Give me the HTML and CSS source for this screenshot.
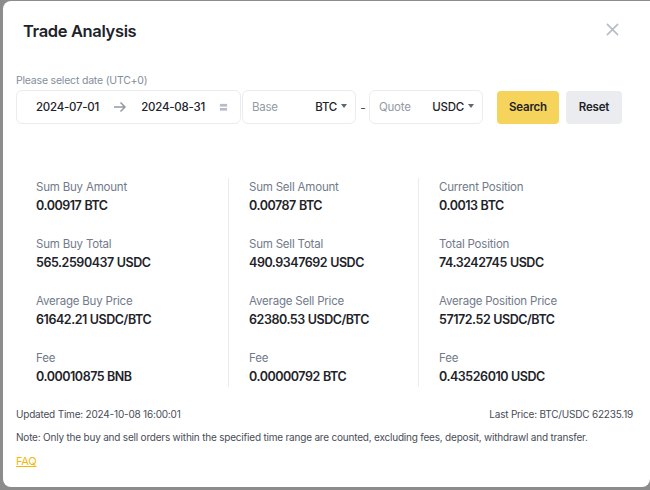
FILE: index.html
```html
<!DOCTYPE html>
<html>
<head>
<meta charset="utf-8">
<link rel="stylesheet" href="styles.css">
</head>
<body>
<div class="modal">
  <div class="header">
    <h1 class="title">Trade Analysis</h1>
    <span class="close">
      <svg width="13" height="13" viewBox="0 0 14 14"><path d="M1.5 1.5L12.5 12.5M12.5 1.5L1.5 12.5" stroke="#b7bdc6" stroke-width="1.8" stroke-linecap="round"/></svg>
    </span>
  </div>
  <div class="filters">
    <div class="label">Please select date (UTC+0)</div>
    <div class="row">
      <div class="field date">
        <span class="val">2024-07-01</span>
        <svg class="arrow" width="14" height="12" viewBox="0 0 14 12"><path d="M1 6H12M7.5 1.5L12 6L7.5 10.5" stroke="#929aa5" stroke-width="1.5" fill="none"/></svg>
        <span class="val">2024-08-31</span>
        <svg class="cal" width="9" height="9" viewBox="0 0 10 10"><rect x="1" y="1" width="8" height="3" fill="#b7bdc6"/><rect x="1" y="5.5" width="8" height="3" fill="#b7bdc6"/></svg>
      </div>
      <div class="field pair">
        <span class="ph">Base</span>
        <span class="sel">BTC<i class="caret"></i></span>
      </div>
      <span class="dash">-</span>
      <div class="field pair">
        <span class="ph">Quote</span>
        <span class="sel">USDC<i class="caret"></i></span>
      </div>
      <button class="btn primary">Search</button>
      <button class="btn secondary">Reset</button>
    </div>
  </div>
  <div class="stats">
    <div class="col">
      <div class="item"><div class="k">Sum Buy Amount</div><div class="v">0.00917<span class="u">BTC</span></div></div>
      <div class="item"><div class="k">Sum Buy Total</div><div class="v">565.2590437<span class="u">USDC</span></div></div>
      <div class="item"><div class="k">Average Buy Price</div><div class="v">61642.21<span class="u">USDC/BTC</span></div></div>
      <div class="item"><div class="k">Fee</div><div class="v">0.00010875 BNB</div></div>
    </div>
    <div class="col">
      <div class="item"><div class="k">Sum Sell Amount</div><div class="v">0.00787<span class="u">BTC</span></div></div>
      <div class="item"><div class="k">Sum Sell Total</div><div class="v">490.9347692<span class="u">USDC</span></div></div>
      <div class="item"><div class="k">Average Sell Price</div><div class="v">62380.53<span class="u">USDC/BTC</span></div></div>
      <div class="item"><div class="k">Fee</div><div class="v">0.00000792<span class="u">BTC</span></div></div>
    </div>
    <div class="col">
      <div class="item"><div class="k">Current Position</div><div class="v">0.0013<span class="u">BTC</span></div></div>
      <div class="item"><div class="k">Total Position</div><div class="v">74.3242745<span class="u">USDC</span></div></div>
      <div class="item"><div class="k">Average Position Price</div><div class="v">57172.52<span class="u">USDC/BTC</span></div></div>
      <div class="item"><div class="k">Fee</div><div class="v">0.43526010<span class="u">USDC</span></div></div>
    </div>
  </div>
  <div class="footer">
    <div class="meta">
      <span>Updated Time: 2024-10-08 16:00:01</span>
      <span>Last Price: BTC/USDC 62235.19</span>
    </div>
    <p class="note">Note: Only the buy and sell orders within the specified time range are counted, excluding fees, deposit, withdrawl and transfer.</p>
    <a class="faq" href="#">FAQ</a>
  </div>
</div>
</body>
</html>
```

FILE: styles.css
```css
* { box-sizing: border-box; }
html, body { margin: 0; padding: 0; }
body {
  width: 650px;
  height: 490px;
  background: #8c8c8c;
  font-family: Inter, "Noto Sans", "Liberation Sans", sans-serif;
  color: #1e2329;
  overflow: hidden;
  padding: 1px 0 0 3px;
}
.modal {
  width: 647px;
  height: 486px;
  background: #fff;
  border-radius: 8px 0 8px 8px;
  padding: 0 0 0 13px;
}
.header {
  display: flex;
  align-items: center;
  justify-content: space-between;
  height: 60px;
  padding: 0 31px 0 7px;
}
.title {
  margin: 0;
  font-size: 16.5px;
  font-weight: 600;
  letter-spacing: -0.35px;
}
.close { display: flex; margin-top: -4px; }
.filters { padding-top: 13px; }
.label {
  font-size: 10.5px;
  color: #848e9c;
  line-height: 14px;
  margin-bottom: 2px;
  letter-spacing: -0.2px;
}
.row {
  display: flex;
  align-items: center;
  height: 34px;
}
.field {
  height: 34px;
  border: 1px solid #eaecef;
  border-radius: 6px;
  display: flex;
  align-items: center;
  font-size: 11.5px;
  font-weight: 500;
  letter-spacing: -0.25px;
}
.date {
  width: 225px;
  padding: 0 12px 0 19px;
  justify-content: space-between;
}
.pair {
  width: 114px;
  margin-left: 1px;
  padding: 0 8px 0 9px;
  justify-content: space-between;
}
.ph { color: #929aa5; font-weight: 400; }
.sel { display: flex; align-items: center; }
.caret {
  display: inline-block;
  width: 0; height: 0;
  border-left: 3px solid transparent;
  border-right: 3px solid transparent;
  border-top: 4px solid #5e6673;
  margin-left: 4px;
  margin-top: -2px;
}
.dash {
  width: 12px;
  margin-left: 1px;
  text-align: center;
  font-size: 12px;
  color: #474d57;
}
.dash + .pair { margin-left: 0; }
.btn {
  height: 33px;
  border: none;
  border-radius: 4px;
  font-family: inherit;
  font-size: 11.5px;
  font-weight: 600;
  color: #1e2329;
  padding: 0;
  letter-spacing: -0.2px;
}
.primary { width: 62px; background: #f6d35b; margin-left: 14px; }
.secondary { width: 56px; background: #eaecef; margin-left: 7px; }
.stats {
  display: grid;
  grid-template-columns: 192px 190px 190px;
  margin: 54px 0 0 20px;
}
.col {
  display: flex;
  flex-direction: column;
  gap: 19px;
}
.col + .col {
  border-left: 1px solid #eaecef;
  padding-left: 20px;
}
.item { display: flex; flex-direction: column; }
.k {
  font-size: 11.5px;
  color: #707a8a;
  line-height: 18px;
  letter-spacing: -0.2px;
}
.v {
  font-size: 12.5px;
  font-weight: 600;
  line-height: 20px;
  letter-spacing: -0.45px;
}
.u { margin-left: 3px; }
.footer {
  padding: 20px 17px 0 0;
  font-size: 10px;
  color: #474d57;
  letter-spacing: -0.2px;
}
.meta {
  display: flex;
  justify-content: space-between;
  line-height: 14px;
}
.note {
  margin: 9px 0 0;
  line-height: 14px;
}
.faq {
  display: inline-block;
  margin-top: 10px;
  font-size: 11px;
  color: #f0b90b;
  text-decoration: underline;
}
```
